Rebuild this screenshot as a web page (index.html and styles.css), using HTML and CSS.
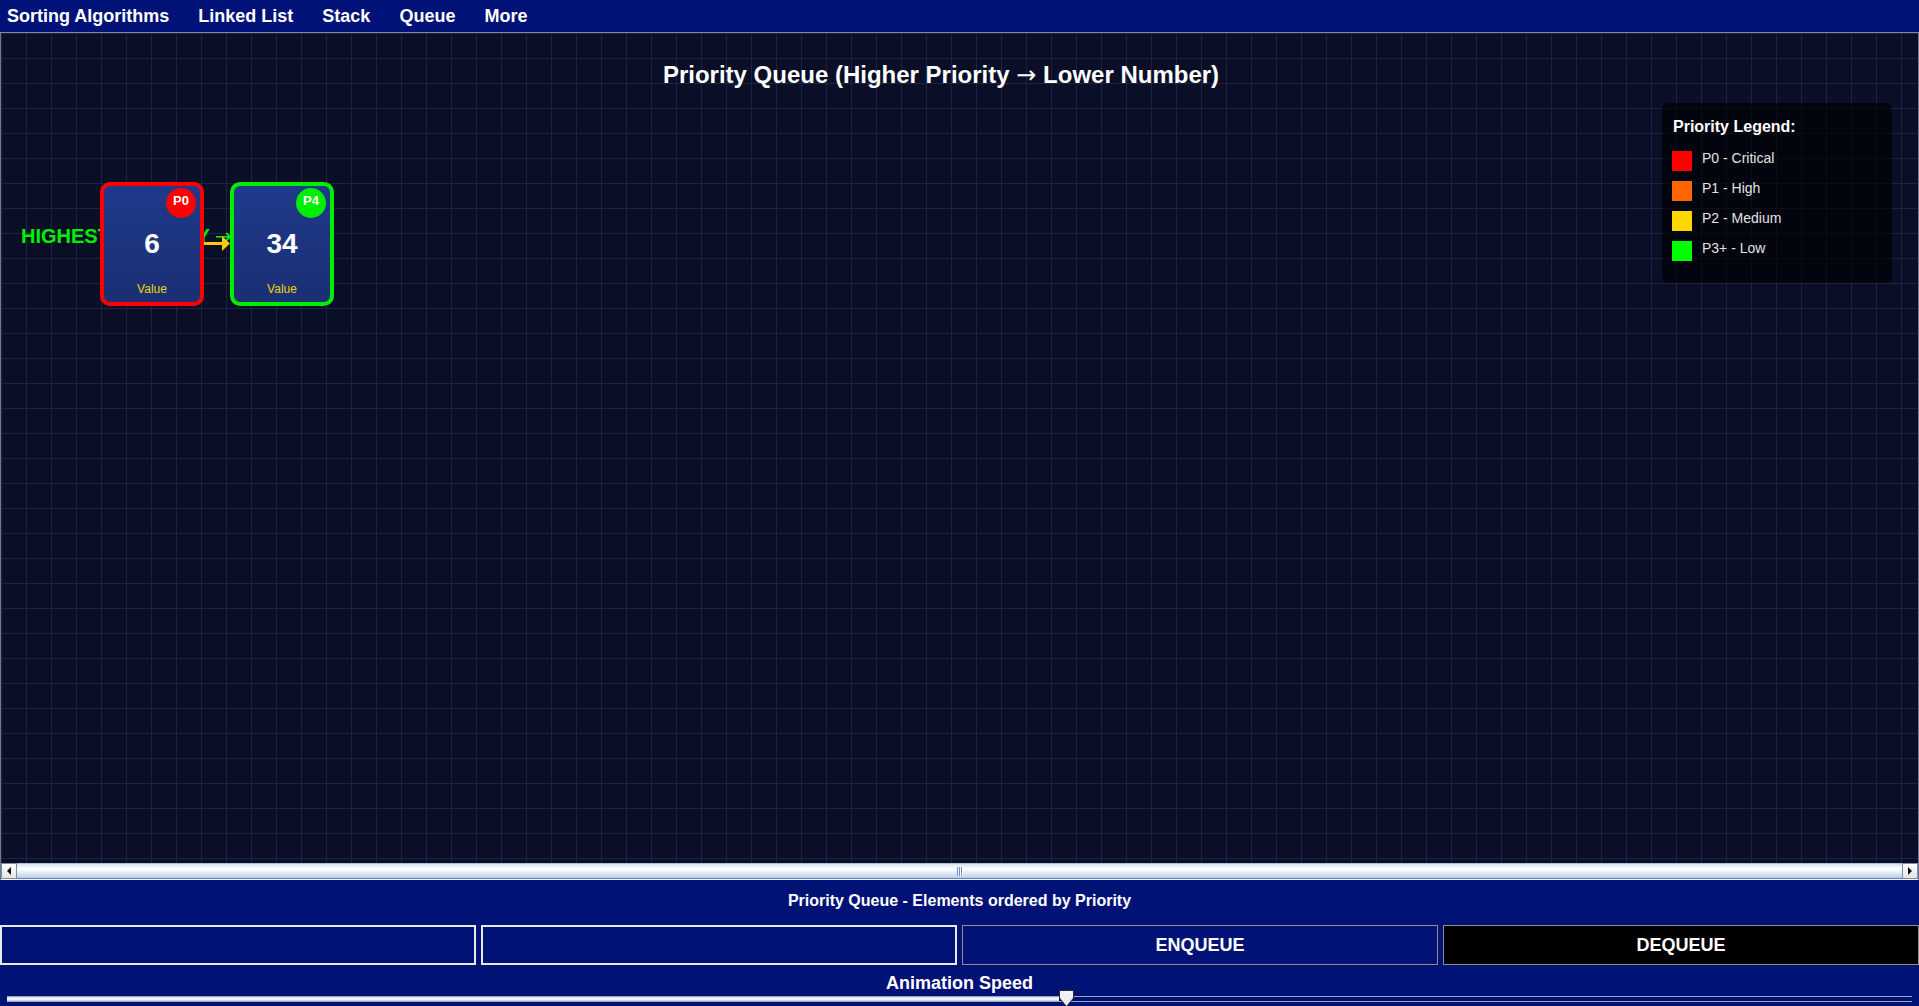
FILE: index.html
```html
<!DOCTYPE html>
<html lang="en">
<head>
<meta charset="utf-8">
<title>Priority Queue</title>
<link rel="stylesheet" href="styles.css">
</head>
<body>
<div class="app">
  <nav class="menubar">
    <span class="menu">Sorting Algorithms</span>
    <span class="menu">Linked List</span>
    <span class="menu">Stack</span>
    <span class="menu">Queue</span>
    <span class="menu">More</span>
  </nav>

  <div class="scrollpane">
    <div class="canvas">
      <h1 class="title">Priority Queue (Higher Priority <span class="arrow">→</span> Lower Number)</h1>

      <div class="highest">HIGHEST PRIORITY <span class="arrow">→</span></div>

      <div class="queue">
        <div class="node p0">
          <span class="badge">P0</span>
          <span class="val">6</span>
          <span class="lbl">Value</span>
        </div>
        <svg class="link" width="26" height="124" viewBox="0 0 26 124">
          <line x1="0" y1="61.5" x2="20" y2="61.5" stroke="#ffc800" stroke-width="3"/>
          <polygon points="18,54 26,61.5 18,69" fill="#ffc800"/>
        </svg>
        <div class="node p4">
          <span class="badge">P4</span>
          <span class="val">34</span>
          <span class="lbl">Value</span>
        </div>
      </div>

      <div class="legend">
        <div class="legend-title">Priority Legend:</div>
        <ul class="legend-list">
          <li class="legend-item"><span class="swatch sw-red"></span><span class="legend-text">P0 - Critical</span></li>
          <li class="legend-item"><span class="swatch sw-orange"></span><span class="legend-text">P1 - High</span></li>
          <li class="legend-item"><span class="swatch sw-yellow"></span><span class="legend-text">P2 - Medium</span></li>
          <li class="legend-item"><span class="swatch sw-green"></span><span class="legend-text">P3+ - Low</span></li>
        </ul>
      </div>
    </div>

    <div class="hscroll">
      <div class="sb-btn">
        <svg width="14" height="14" viewBox="0 0 14 14"><polygon points="9,3 5,7 9,11" fill="#111"/></svg>
      </div>
      <div class="sb-thumb"><span class="grip"></span></div>
      <div class="sb-btn">
        <svg width="14" height="14" viewBox="0 0 14 14"><polygon points="5,3 9,7 5,11" fill="#111"/></svg>
      </div>
    </div>
  </div>

  <div class="controls">
    <div class="caption">Priority Queue - Elements ordered by Priority</div>
    <div class="ctrl-row">
      <input class="field" type="text" aria-label="Value">
      <input class="field" type="text" aria-label="Priority">
      <button class="btn">ENQUEUE</button>
      <button class="btn btn-dark">DEQUEUE</button>
    </div>
    <div class="speed-label">Animation Speed</div>
    <div class="slider">
      <div class="slider-track">
        <div class="slider-fill" style="width:1052px"></div>
      </div>
      <svg class="slider-thumb" width="15" height="18" viewBox="0 0 15 18">
        <path d="M0.5 0.5 H14.5 V8 L7.5 16.5 L0.5 8 Z" fill="#eef0f4" stroke="#2b2b2b" stroke-width="1"/>
        <path d="M2 2 H13" stroke="#ffffff" stroke-width="1"/>
      </svg>
    </div>
  </div>
</div>
</body>
</html>
```

FILE: styles.css
```css
* {
  box-sizing: border-box;
  margin: 0;
  padding: 0;
}

html, body {
  width: 1919px;
  height: 1006px;
  overflow: hidden;
}

body {
  font-family: "Liberation Sans", Arial, sans-serif;
  background: #001276;
  color: #ffffff;
}

.app {
  display: flex;
  flex-direction: column;
  height: 1006px;
}

/* ---------- menu bar ---------- */
.menubar {
  flex: none;
  height: 33px;
  display: flex;
  gap: 29px;
  padding-left: 7px;
  background: #001278;
  border-bottom: 1px solid #7d8aa3;
}

.menu {
  font-size: 18px;
  font-weight: bold;
  line-height: 32px;
  color: #ffffff;
}

/* ---------- scroll pane / canvas ---------- */
.scrollpane {
  flex: none;
  display: flex;
  flex-direction: column;
  border-left: 1px solid #6d7891;
  border-right: 1px solid #6d7891;
}

.canvas {
  position: relative;
  height: 830px;
  padding: 30px 37px 0 0;
  background-color: #0a0e27;
  background-image:
    linear-gradient(to right, #1b2440 1px, transparent 1px),
    linear-gradient(to bottom, #1b2440 1px, transparent 1px);
  background-size: 25px 25px;
  overflow: hidden;
}

.title {
  font-size: 24px;
  font-weight: bold;
  line-height: 24px;
  text-align: center;
  color: #ffffff;
}

.arrow {
  font-family: "DejaVu Sans", sans-serif;
  font-weight: normal;
  font-size: 1em;
}

.highest {
  position: absolute;
  left: 20px;
  top: 193px;
  font-size: 20px;
  font-weight: bold;
  line-height: 20px;
  color: #00f000;
  white-space: nowrap;
}

.queue {
  position: absolute;
  left: 99px;
  top: 149px;
  display: flex;
}

.node {
  position: relative;
  width: 104px;
  height: 124px;
  border: 4px solid;
  border-radius: 10px;
  background: linear-gradient(to bottom, #1f3a8a 0%, #1a2f74 100%);
  display: flex;
  flex-direction: column;
  align-items: center;
  padding-top: 44px;
}

.node.p0 { border-color: #ff0000; }
.node.p4 { border-color: #00ee00; }

.badge {
  position: absolute;
  left: 62px;
  top: 2px;
  width: 30px;
  height: 30px;
  border-radius: 50%;
  font-size: 13px;
  font-weight: bold;
  line-height: 25px;
  text-align: center;
  color: #ffffff;
}

.p0 .badge { background: #ff0000; }
.p4 .badge { background: #00ee00; }

.val {
  font-size: 28px;
  font-weight: bold;
  line-height: 28px;
  color: #ffffff;
}

.lbl {
  margin-top: 25px;
  font-size: 12px;
  line-height: 12px;
  color: #eed400;
}

.link {
  display: block;
  flex: none;
}

/* ---------- legend ---------- */
.legend {
  position: absolute;
  top: 70px;
  right: 26px;
  width: 230px;
  height: 180px;
  padding: 16px 10px;
  border-radius: 7px;
  background: rgba(0, 0, 0, 0.62);
}

.legend-title {
  font-size: 16px;
  font-weight: bold;
  line-height: 16px;
  padding-left: 1px;
  color: #ffffff;
}

.legend-list {
  list-style: none;
  margin-top: 16px;
  display: flex;
  flex-direction: column;
  gap: 10px;
}

.legend-item {
  display: flex;
  align-items: flex-start;
  gap: 10px;
  height: 20px;
}

.swatch {
  flex: none;
  width: 20px;
  height: 20px;
}

.sw-red { background: #ff0000; }
.sw-orange { background: #ff6600; }
.sw-yellow { background: #ffd700; }
.sw-green { background: #00ff00; }

.legend-text {
  font-size: 14px;
  line-height: 14px;
  color: #e2e2e2;
}

/* ---------- horizontal scrollbar ---------- */
.hscroll {
  flex: none;
  height: 17px;
  display: flex;
  background: #eeeeee;
  border-bottom: 1px solid #f4f4f4;
}

.sb-btn {
  flex: none;
  width: 16px;
  height: 16px;
  display: flex;
  align-items: center;
  justify-content: center;
  background: linear-gradient(to bottom, #ffffff, #e4e4e4);
  border: 1px solid #7a8cab;
}

.sb-thumb {
  flex: 1;
  height: 16px;
  display: flex;
  align-items: center;
  justify-content: center;
  border-top: 1px solid #a9c0e0;
  border-bottom: 1px solid #6382bf;
  background: linear-gradient(to bottom, #d6e4f5 0%, #ffffff 35%, #e6eef8 60%, #b7cce6 100%);
}

.grip {
  width: 6px;
  height: 9px;
  background: repeating-linear-gradient(to right, #6b8ad0 0 1px, #ffffff 1px 2px);
}

/* ---------- bottom controls ---------- */
.controls {
  flex: 1;
  display: flex;
  flex-direction: column;
  background: #001276;
}

.caption {
  padding-top: 13px;
  font-size: 16px;
  font-weight: bold;
  line-height: 16px;
  text-align: center;
}

.ctrl-row {
  margin-top: 16px;
  display: grid;
  grid-template-columns: repeat(4, 1fr);
  gap: 5px;
  height: 40px;
}

.field {
  height: 40px;
  background: #001276;
  border: 2px solid #e9e9e9;
  outline: none;
  color: #ffffff;
  font-family: inherit;
  font-size: 16px;
}

.btn {
  height: 40px;
  background: #001276;
  border: 1px solid #8c8c8c;
  color: #ffffff;
  font-family: inherit;
  font-size: 18px;
  font-weight: bold;
}

.btn-dark {
  background: #000000;
}

.speed-label {
  margin-top: 9px;
  font-size: 18px;
  font-weight: bold;
  line-height: 18px;
  text-align: center;
}

.slider {
  position: relative;
  flex: 1;
  padding: 4px 7px 0 7px;
}

.slider-track {
  height: 6px;
  border-top: 1px solid #a0a6b8;
  border-bottom: 1px solid #a0a6b8;
  background: #001276;
}

.slider-fill {
  height: 4px;
  background: linear-gradient(to bottom, #c8d8ee, #ffffff 50%, #b9cbe6);
}

.slider-thumb {
  position: absolute;
  left: 1059px;
  top: -2px;
  display: block;
}
```
